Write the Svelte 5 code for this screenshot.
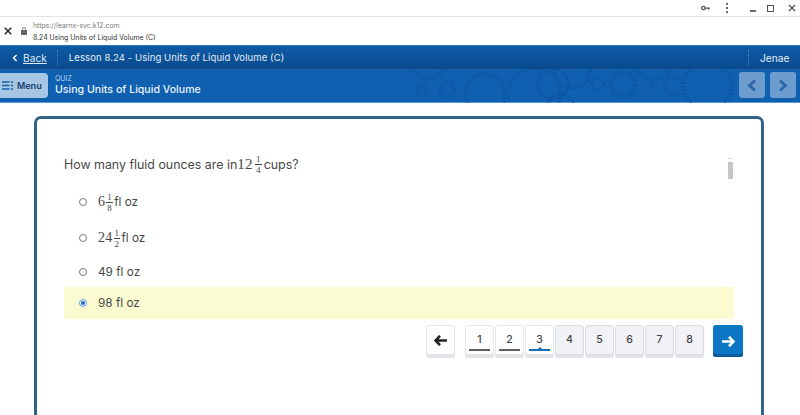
<script>
	const pages = [
		{ n: 1, state: 'done' },
		{ n: 2, state: 'done' },
		{ n: 3, state: 'current' },
		{ n: 4, state: '' },
		{ n: 5, state: '' },
		{ n: 6, state: '' },
		{ n: 7, state: '' },
		{ n: 8, state: '' }
	];

	// decorative gear rings in the quiz bar
	const gears = [
		{ x: 428, y: 62, r: 17, w: 4 },
		{ x: 422, y: 90, r: 5, w: 3 },
		{ x: 447, y: 90, r: 7, w: 4 },
		{ x: 485, y: 94, r: 20, w: 4 },
		{ x: 534, y: 94, r: 26, w: 3 },
		{ x: 553, y: 84, r: 15, w: 3 },
		{ x: 572, y: 70, r: 18, w: 4 },
		{ x: 561, y: 108, r: 14, w: 3 },
		{ x: 598, y: 84, r: 6, w: 3 },
		{ x: 623, y: 85, r: 12, w: 5 },
		{ x: 648, y: 88, r: 5, w: 2 },
		{ x: 654, y: 62, r: 18, w: 4 },
		{ x: 673, y: 86, r: 9, w: 4 },
		{ x: 708, y: 86, r: 24, w: 4 }
	];
</script>

<div class="page">
	<div class="window-bar">
		<svg class="key" width="9" height="6" viewBox="0 0 9 6"><circle cx="2.4" cy="3" r="1.7" fill="none" stroke="#555" stroke-width="1.3" /><path d="M4 2.4h5v1.4H8v1H7v-1H4z" fill="#555" /></svg>
		<span class="dots"><i></i><i></i><i></i></span>
		<span class="min"></span>
		<span class="max"></span>
		<svg class="win-x" width="8" height="8" viewBox="0 0 8 8"><path d="M1 1l6 6M7 1L1 7" stroke="#555" stroke-width="1.3" /></svg>
	</div>

	<div class="address">
		<svg class="close" width="8" height="8" viewBox="0 0 8 8"><path d="M.8.8l6.4 6.4M7.2.8L.8 7.2" stroke="#222" stroke-width="1.5" /></svg>
		<svg class="lock" width="6" height="8" viewBox="0 0 6 8"><path d="M1.3 3.2V2.2a1.7 1.7 0 0 1 3.4 0v1" fill="none" stroke="#666" stroke-width=".8" /><rect y="3" width="6" height="5" rx=".6" fill="#666" /></svg>
		<div class="address-text">
			<div class="url">https://learnx-svc.k12.com</div>
			<div class="tab">8.24 Using Units of Liquid Volume (C)</div>
		</div>
	</div>

	<header class="lesson-bar">
		<svg class="chev" width="6" height="8" viewBox="0 0 6 8"><path d="M4.6 1L1.6 4l3 3" fill="none" stroke="#fff" stroke-width="1.5" /></svg>
		<a class="back" href="#top">Back</a>
		<span class="sep"></span>
		<span class="lesson">Lesson 8.24 - Using Units of Liquid Volume (C)</span>
		<span class="sep user-sep"></span>
		<span class="user">Jenae</span>
	</header>

	<div class="quiz-bar">
		<svg class="gears" width="800" height="34" viewBox="0 69 800 34">
			{#each gears as g}
				<circle cx={g.x} cy={g.y} r={g.r} fill="none" stroke="#0e4f97" stroke-width={g.w} stroke-dasharray="1.5 2" opacity="0.6" />
			{/each}
		</svg>
		<button class="menu">
			<svg width="11" height="9" viewBox="0 0 11 9"><path d="M0 1h7.500M0 4.500h7.500M0 8h7.500M9 1h2M9 4.500h2M9 8h2" stroke="#1560a8" stroke-width="1.500" /></svg>
			Menu
		</button>
		<div class="quiz-title">
			<div class="quiz-label">QUIZ</div>
			<div class="quiz-name">Using Units of Liquid Volume</div>
		</div>
		<div class="arrows">
			<span class="arrow"><svg width="10" height="13" viewBox="0 0 10 13"><path d="M8 1.500L2.500 6.500 8 11.500" fill="none" stroke="#2c65a5" stroke-width="2.800" /></svg></span>
			<span class="arrow"><svg width="10" height="13" viewBox="0 0 10 13"><path d="M2 1.500l5.500 5-5.500 5" fill="none" stroke="#2c65a5" stroke-width="2.800" /></svg></span>
		</div>
	</div>

	<main class="card">
		<div class="scroll-thumb"></div>
		<p class="question">
			How many fluid ounces are in<span class="math big">12<span class="frac"><span>1</span><span>4</span></span></span>cups?
		</p>

		<ul class="options">
			<li class="tall">
				<span class="radio"></span>
				<span class="math">6<span class="frac"><span>1</span><span>8</span></span></span>
				<span>fl oz</span>
			</li>
			<li class="tall">
				<span class="radio"></span>
				<span class="math">24<span class="frac"><span>1</span><span>2</span></span></span>
				<span>fl oz</span>
			</li>
			<li class="short">
				<span class="radio"></span>
				<span>49 fl oz</span>
			</li>
			<li class="selected">
				<span class="radio on"></span>
				<span>98 fl oz</span>
			</li>
		</ul>

		<nav class="pager">
			<button class="nav-btn prev" aria-label="Previous">
				<svg width="13" height="11" viewBox="0 0 13 11"><path d="M6 .8L1.500 5.500 6 10.200M2 5.500h11" fill="none" stroke="#222" stroke-width="2.600" /></svg>
			</button>
			<div class="pages">
				{#each pages as p}
					<button class="num {p.state}">{p.n}</button>
				{/each}
			</div>
			<button class="nav-btn next" aria-label="Next">
				<svg width="13" height="11" viewBox="0 0 13 11"><path d="M7 .8l4.500 4.700L7 10.200M11 5.500H0" fill="none" stroke="#fff" stroke-width="2.600" /></svg>
			</button>
		</nav>
	</main>
</div>

<style>
	:global(body) {
		margin: 0;
		background: #fff;
	}

	.page {
		width: 800px;
		height: 415px;
		overflow: hidden;
		font-family: Inter, 'Open Sans', sans-serif;
		color: #484848;
	}

	.window-bar {
		height: 16px;
		border-bottom: 1px solid #e4e4e4;
		display: flex;
		align-items: center;
		justify-content: flex-end;
		padding-right: 4px;
	}

	.key {
		margin-right: 16px;
	}

	.dots {
		display: flex;
		flex-direction: column;
		gap: 2px;
		margin-right: 22px;
	}

	.dots i {
		width: 2px;
		height: 2px;
		background: #666;
	}

	.min {
		width: 6px;
		height: 2px;
		background: #666;
		margin: 5px 11px 0 0;
	}

	.max {
		width: 5px;
		height: 5px;
		border: 1.5px solid #555;
		margin-right: 14px;
	}

	.address {
		height: 28px;
		display: flex;
		align-items: center;
		padding-left: 4px;
	}

	.lock {
		margin-left: 9px;
	}

	.address-text {
		margin: 2px 0 0 6px;
		font-size: 6.900px;
		line-height: 12px;
	}

	.url {
		color: #7a7a7a;
	}

	.tab {
		color: #333;
	}

	.lesson-bar {
		box-sizing: border-box;
		height: 24px;
		background: linear-gradient(#0d5ba5, #0a4a8d);
		border-top: 1px solid #2b78bd;
		display: flex;
		align-items: center;
		padding-left: 12px;
		color: #e4eef8;
		font-size: 10.200px;
	}

	.back {
		color: #dfeaf5;
		margin-left: 5px;
		text-decoration: underline;
	}

	.sep {
		height: 16px;
		border-left: 1px dotted #4f86bb;
		margin-left: 10px;
	}

	.lesson {
		margin-left: 11px;
		font-size: 9.500px;
		letter-spacing: 0.1px;
	}

	.user-sep {
		margin-left: auto;
	}

	.user {
		width: 40px;
		margin-left: 11px;
		font-size: 10.200px;
	}

	.quiz-bar {
		position: relative;
		height: 34px;
		background: #0f60b1;
		display: flex;
		align-items: center;
		border-bottom: 1px solid #5b98d0;
		box-sizing: border-box;
	}

	.gears {
		position: absolute;
		left: 0;
		top: 0;
	}

	.menu {
		position: relative;
		width: 48px;
		height: 25px;
		margin-bottom: 1px;
		border: 0;
		border-radius: 0 4px 4px 0;
		background: #a6c6e3;
		color: #123f6e;
		font: 600 9px Inter, sans-serif;
		display: flex;
		align-items: center;
		gap: 4px;
		padding: 0 0 0 2px;
	}

	.quiz-title {
		position: relative;
		margin-left: 7px;
		color: #fff;
	}

	.quiz-label {
		font-size: 7px;
		line-height: 9px;
		color: #b9d4ee;
	}

	.quiz-name {
		font-size: 10.600px;
		line-height: 14px;
		font-weight: 500;
		color: #e9f2fa;
	}

	.arrows {
		position: relative;
		margin-left: auto;
		margin-right: 4px;
		margin-bottom: 1px;
		display: flex;
		gap: 5px;
	}

	.arrow {
		width: 26px;
		height: 26px;
		border-radius: 3px;
		background: #6d9dcf;
		display: flex;
		align-items: center;
		justify-content: center;
	}

	.card {
		position: relative;
		width: 730px;
		height: 320px;
		box-sizing: border-box;
		margin: 13px 0 0 34px;
		border: 3px solid #2f6487;
		border-radius: 7px;
		padding: 35px 27px 0;
	}

	.scroll-thumb {
		position: absolute;
		left: 691px;
		top: 39px;
		width: 5px;
		height: 20px;
		background: linear-gradient(#fff 0, #fff 3px, #c6c6c6 3px);
		border-top: 1px solid #ddd;
	}

	.question {
		margin: 0;
		height: 20px;
		display: flex;
		align-items: center;
		font-size: 12.400px;
		white-space: pre;
	}

	.math {
		display: inline-flex;
		align-items: center;
		font-family: 'Liberation Serif', serif;
		font-size: 14px;
		letter-spacing: 0.3px;
	}

	.math.big {
		font-size: 15px;
	}

	.frac {
		display: inline-flex;
		flex-direction: column;
		align-items: center;
		margin: 0 1px;
		font-size: 9px;
		line-height: 10px;
	}

	.big .frac {
		margin: 0 2px;
	}

	.frac span:first-child {
		border-bottom: 1px solid #444;
		padding: 0 1px;
	}

	.options {
		list-style: none;
		margin: 10px 0 0;
		padding: 0;
		font-size: 11.800px;
	}

	.options li {
		display: flex;
		align-items: center;
		padding-left: 15px;
		white-space: pre;
	}

	.tall {
		height: 36px;
	}

	.short {
		height: 31px;
	}

	.options .selected {
		height: 32px;
		background: #fbfbd2;
	}

	.radio {
		width: 6px;
		height: 6px;
		border: 1px solid #777;
		border-radius: 50%;
		margin-right: 11px;
		background: #fff;
		flex: none;
	}

	.radio.on {
		border-color: #8db4e4;
		background: #1a6fd0;
		box-shadow: inset 0 0 0 1px #fff;
	}

	.pager {
		display: flex;
		align-items: flex-start;
		width: max-content;
		margin: 6px 0 0 362px;
	}

	.pages {
		display: flex;
		gap: 1px;
		margin-left: 10px;
	}

	.nav-btn,
	.num {
		box-sizing: border-box;
		flex: none;
		width: 29px;
		height: 30px;
		padding: 0;
		border: 1px solid #e3e5ea;
		border-radius: 3px;
		background: #fff;
		box-shadow: 0 3px 0 #e2e3e6;
		display: flex;
		align-items: center;
		justify-content: center;
	}

	.num {
		position: relative;
		background: #f0f2f6;
		border-color: #d8dce3;
		color: #444;
		font: 500 10.500px Inter, sans-serif;
		padding-bottom: 2px;
	}

	.num.done,
	.num.current {
		background: #fff;
		border-color: #e6e8ec;
	}

	.num.done::after,
	.num.current::after {
		content: '';
		position: absolute;
		left: 3px;
		right: 3px;
		bottom: 3px;
		height: 2px;
		background: #5f5f5f;
	}

	.num.current::after {
		background: #1a70b5;
	}

	.num.current::before {
		content: '';
		position: absolute;
		left: 12px;
		bottom: 5px;
		border: 2px solid transparent;
		border-top: 0;
		border-bottom-color: #1a70b5;
	}

	.next {
		margin-left: 9px;
		width: 30px;
		height: 32px;
		border: 0;
		background: #0b76c4;
		box-shadow: inset 0 -3px 0 #0a5c9a;
	}
</style>
